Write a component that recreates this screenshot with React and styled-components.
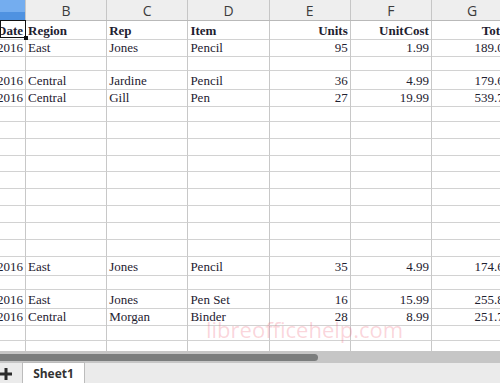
import React from "react";
import styled, { createGlobalStyle } from "styled-components";

const GlobalStyle = createGlobalStyle`
  html, body {
    margin: 0;
    padding: 0;
    background: #fff;
  }
`;

const COLS = "26px repeat(6, 81.2px)";
const ROW_H = "16.84px";

const letters = ["", "B", "C", "D", "E", "F", "G"];

// [A, B, C, D, E, F, G]
const data = [
  ["Date", "Region", "Rep", "Item", "Units", "UnitCost", "Total"],
  ["1/6/2016", "East", "Jones", "Pencil", "95", "1.99", "189.05"],
  null,
  ["1/23/2016", "Central", "Jardine", "Pencil", "36", "4.99", "179.64"],
  ["2/9/2016", "Central", "Gill", "Pen", "27", "19.99", "539.73"],
  null,
  null,
  null,
  null,
  null,
  null,
  null,
  null,
  null,
  ["2/26/2016", "East", "Jones", "Pencil", "35", "4.99", "174.65"],
  null,
  ["3/15/2016", "East", "Jones", "Pen Set", "16", "15.99", "255.84"],
  ["4/1/2016", "Central", "Morgan", "Binder", "28", "8.99", "251.72"],
  null,
  null,
];

export default function App() {
  return (
    <>
      <GlobalStyle />
      <Window>
        <Sheet>
          <HeaderRow>
            {letters.map((l, i) => (
              <ColHead key={i} selected={i === 0}>
                {l}
              </ColHead>
            ))}
          </HeaderRow>
          {data.map((row, r) => (
            <Row key={r}>
              {letters.map((_, c) => {
                const val = row ? row[c] : "";
                const numeric = c === 0 || (r > 0 && c >= 4);
                return (
                  <Cell
                    key={c}
                    bold={r === 0}
                    right={numeric || (r === 0 && c >= 4)}
                  >
                    {val}
                  </Cell>
                );
              })}
            </Row>
          ))}
          <Selection />
          <Watermark>libreofficehelp.com</Watermark>
        </Sheet>
        <Track>
          <Thumb />
        </Track>
        <TabBar>
          <AddSheet>
            <svg width="12" height="12" viewBox="0 0 12 12">
              <rect x="4.5" y="0" width="3" height="12" fill="#2b2b2b" />
              <rect x="0" y="4.5" width="12" height="3" fill="#2b2b2b" />
            </svg>
          </AddSheet>
          <Tab>Sheet1</Tab>
        </TabBar>
      </Window>
    </>
  );
}

const Window = styled.div`
  width: 500px;
  height: 383px;
  display: flex;
  flex-direction: column;
  overflow: hidden;
  background: #fff;
`;

const Sheet = styled.div`
  flex: 1;
  min-height: 0;
  overflow: hidden;
  position: relative;
`;

const HeaderRow = styled.div`
  display: grid;
  grid-template-columns: ${COLS};
  height: 21px;
  box-sizing: border-box;
  border-bottom: 1px solid #b9b9b9;
  background: #eeeeee;
`;

const ColHead = styled.div`
  box-sizing: border-box;
  border-right: 1px solid #c6c6c6;
  display: flex;
  align-items: center;
  justify-content: center;
  font-family: "Open Sans", "Noto Sans", sans-serif;
  font-size: 14px;
  color: #3c3c3c;
  background: ${(p) =>
    p.selected ? "linear-gradient(#74adef 0 62%, #4f92e1 62%)" : "transparent"};
`;

const Row = styled.div`
  display: grid;
  grid-template-columns: ${COLS};
  height: ${ROW_H};
`;

const Cell = styled.div`
  box-sizing: border-box;
  border-right: 1px solid #c8c8c8;
  border-bottom: 1px solid #d2d2d2;
  padding: 2px 2px 0;
  display: flex;
  align-items: center;
  justify-content: ${(p) => (p.right ? "flex-end" : "flex-start")};
  white-space: nowrap;
  font-family: "Liberation Serif", "Times New Roman", serif;
  font-size: 13px;
  font-weight: ${(p) => (p.bold ? 700 : 400)};
  color: #1e2130;

  &:first-child {
    overflow: hidden;
    justify-content: flex-end;
  }
`;

const Selection = styled.div`
  position: absolute;
  left: 0;
  top: 20px;
  width: 26px;
  height: 18.3px;
  box-sizing: border-box;
  border: 1.5px solid #111;

  &::after {
    content: "";
    position: absolute;
    right: -3px;
    bottom: -3px;
    width: 4px;
    height: 4px;
    background: #111;
  }
`;

const Watermark = styled.div`
  position: absolute;
  left: 206px;
  top: 314px;
  font-family: "Open Sans", "Noto Sans", sans-serif;
  font-size: 22px;
  font-weight: 400;
  line-height: 30px;
  color: rgba(240, 110, 130, 0.28);
  pointer-events: none;
`;

const Track = styled.div`
  height: 12px;
  flex-shrink: 0;
  background: #c6c6c6;
  display: flex;
  align-items: center;
`;

const Thumb = styled.div`
  width: 318px;
  height: 7px;
  border-radius: 0 4px 4px 0;
  background: #7b7d7d;
`;

const TabBar = styled.div`
  height: 20px;
  flex-shrink: 0;
  background: #ebebeb;
  display: flex;
  align-items: stretch;
  gap: 10px;
`;

const AddSheet = styled.div`
  width: 12px;
  display: flex;
  align-items: center;
  padding-top: 1px;
`;

const Tab = styled.div`
  width: 63px;
  box-sizing: border-box;
  margin-top: -1px;
  border: 1px solid #bcbcbc;
  border-bottom: none;
  background: #fff;
  display: flex;
  align-items: center;
  justify-content: center;
  font-family: "Open Sans", "Noto Sans", sans-serif;
  font-size: 12px;
  font-weight: 700;
  color: #333;
`;
